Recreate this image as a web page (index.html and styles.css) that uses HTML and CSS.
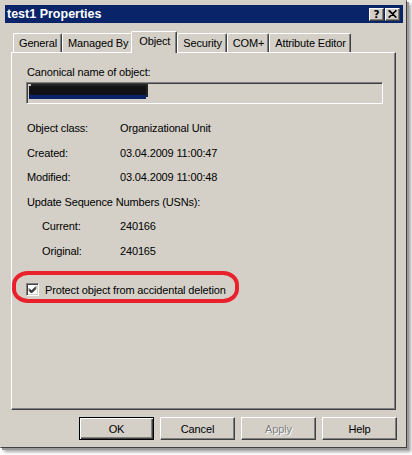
FILE: index.html
```html
<!DOCTYPE html>
<html>
<head>
<meta charset="utf-8">
<link rel="stylesheet" href="styles.css">
</head>
<body>
<div class="window">
  <div class="titlebar">
    <span class="title">test1 Properties</span>
    <div class="tb-buttons">
      <span class="tb-btn">?</span>
      <span class="tb-btn close">
        <svg width="9" height="8" viewBox="0 0 9 8"><path d="M0.5 0.5 L8 7.5 M1.5 0.5 L8.5 7.5 M8 0.5 L0.5 7.5 M8.5 0.5 L1 7.5" stroke="#000" stroke-width="1.1" fill="none"/></svg>
      </span>
    </div>
  </div>
  <div class="tabs">
    <span class="tab">General</span>
    <span class="tab">Managed By</span>
    <span class="tab active">Object</span>
    <span class="tab">Security</span>
    <span class="tab">COM+</span>
    <span class="tab">Attribute Editor</span>
  </div>
  <div class="panel">
    <div class="label">Canonical name of object:</div>
    <div class="textbox"><span class="redact"></span></div>
    <div class="rows">
      <div class="row"><span class="k">Object class:</span><span class="v">Organizational Unit</span></div>
      <div class="row"><span class="k">Created:</span><span class="v">03.04.2009 11:00:47</span></div>
      <div class="row"><span class="k">Modified:</span><span class="v">03.04.2009 11:00:48</span></div>
      <div class="row"><span class="k">Update Sequence Numbers (USNs):</span></div>
      <div class="row sub"><span class="k">Current:</span><span class="v">240166</span></div>
      <div class="row sub"><span class="k">Original:</span><span class="v">240165</span></div>
    </div>
    <div class="check">
      <span class="box"><svg width="9" height="9" viewBox="0 0 9 9"><path d="M1 3.5 L3.5 6 L8 1.5 M1 4.5 L3.5 7 L8 2.5 M1 5.5 L3.5 8 L8 3.5" stroke="#000" stroke-width="1" fill="none"/></svg></span>
      <span>Protect object from accidental deletion</span>
      <div class="ring"></div>
    </div>
  </div>
  <div class="buttons">
    <span class="btn default"><span>OK</span></span>
    <span class="btn"><span>Cancel</span></span>
    <span class="btn disabled"><span>Apply</span></span>
    <span class="btn"><span>Help</span></span>
  </div>
</div>
</body>
</html>
```
FILE: styles.css
```css
html, body {
  margin: 0;
  padding: 0;
  background: #ffffff;
}
body {
  width: 412px;
  height: 455px;
  overflow: hidden;
  font-family: "Liberation Sans", Arial, sans-serif;
  font-size: 11px;
  letter-spacing: -0.15px;
  color: #000;
}
.window {
  box-sizing: border-box;
  width: 407px;
  height: 448px;
  background: #d4d0c8;
  border-top: 1px solid #d4d0c8;
  border-left: 1px solid #d4d0c8;
  border-right: 1px solid #404040;
  border-bottom: 1px solid #404040;
  box-shadow: 2px 2px 0 #9a9a9a, 4px 4px 3px rgba(0,0,0,0.35);
  padding: 4px 3px 3px 3px;
  display: flex;
  flex-direction: column;
  position: relative;
}
.titlebar {
  height: 18px;
  margin: 0 0 0 1px;
  background: #0a246a;
  display: flex;
  align-items: center;
  justify-content: space-between;
  padding: 0 3px 0 2px;
}
.title {
  color: #fff;
  font-family: "Liberation Sans", sans-serif;
  font-weight: bold;
  font-size: 12.5px;
  letter-spacing: 0;
}
.tb-buttons {
  display: flex;
  gap: 1px;
}
.tb-btn {
  box-sizing: border-box;
  width: 15px;
  height: 13px;
  background: #d4d0c8;
  border-top: 1px solid #fff;
  border-left: 1px solid #fff;
  border-right: 1px solid #404040;
  border-bottom: 1px solid #404040;
  box-shadow: inset -1px -1px 0 #808080;
  display: flex;
  align-items: center;
  justify-content: center;
  font-family: "DejaVu Sans", sans-serif;
  font-weight: bold;
  font-size: 10.5px;
  line-height: 1;
  letter-spacing: 0;
}
.tabs {
  display: flex;
  align-items: flex-end;
  margin: 8px 0 0 7px;
  padding-left: 2px;
  height: 21px;
  position: relative;
  z-index: 2;
}
.tab {
  box-sizing: border-box;
  height: 19px;
  padding: 3px 4px 0 5px;
  border-top: 1px solid #fff;
  border-left: 1px solid #fff;
  border-right: 1px solid #404040;
  box-shadow: inset -1px 0 0 #808080;
  border-radius: 2px 2px 0 0;
  margin-right: 0;
  white-space: nowrap;
}
.tab.active {
  height: 22px;
  margin: 0 -1px 0 -2px;
  padding: 3px 6px 0 7px;
  background: #d4d0c8;
  position: relative;
  top: 1px;
}
.tab.active + .tab { margin-left: 1px; }
.panel {
  box-sizing: border-box;
  margin: 0 7px 0 7px;
  height: 358px;
  border-top: 1px solid #fff;
  border-left: 1px solid #fff;
  border-right: 1px solid #404040;
  border-bottom: 1px solid #404040;
  box-shadow: inset -1px -1px 0 #808080;
  padding: 12px 12px 0 15px;
  position: relative;
  z-index: 1;
}
.label {
  height: 14px;
  line-height: 14px;
}
.textbox {
  box-sizing: border-box;
  margin: 3px 0 0 -1px;
  width: 357px;
  height: 22px;
  border-top: 1px solid #808080;
  border-left: 1px solid #808080;
  border-right: 1px solid #fff;
  border-bottom: 1px solid #fff;
  box-shadow: inset 1px 1px 0 #404040, inset -1px -1px 0 #d4d0c8;
  padding: 3px 2px;
  display: flex;
}
.redact {
  display: block;
  width: 117px;
  height: 13px;
  background: linear-gradient(#141414, #101018 70%, #0a246a 70%);
  box-shadow: 2px -2px 0 #222;
}
.rows {
  margin-top: 17px;
  display: flex;
  flex-direction: column;
  gap: 10.5px;
}
.row {
  display: flex;
  height: 14px;
  line-height: 14px;
}
.row .k { width: 93px; white-space: nowrap; }
.row.sub .k { width: 78px; margin-left: 15px; }
.check {
  margin-top: 25px;
  display: flex;
  align-items: center;
  gap: 6px;
  height: 14px;
  position: relative;
  margin-left: -1px;
}
.box {
  box-sizing: border-box;
  width: 13px;
  height: 13px;
  background: #fff;
  border-top: 1px solid #808080;
  border-left: 1px solid #808080;
  border-right: 1px solid #fff;
  border-bottom: 1px solid #fff;
  box-shadow: inset 1px 1px 0 #404040, inset -1px -1px 0 #d4d0c8;
  display: flex;
  align-items: center;
  justify-content: center;
}
.ring {
  position: absolute;
  left: -14px;
  top: -12px;
  width: 219px;
  height: 24px;
  border: 4px solid #e8212b;
  border-radius: 16px / 14px;
}
.buttons {
  display: flex;
  justify-content: flex-end;
  gap: 6px;
  margin: 7px 6px 0 0;
}
.btn {
  box-sizing: border-box;
  width: 75px;
  height: 23px;
  border-top: 1px solid #fff;
  border-left: 1px solid #fff;
  border-right: 1px solid #404040;
  border-bottom: 1px solid #404040;
  box-shadow: inset -1px -1px 0 #808080;
  display: flex;
  align-items: center;
  justify-content: center;
}
.btn.default {
  border: 1px solid #000;
  box-shadow: inset 1px 1px 0 #fff, inset -1px -1px 0 #404040, inset -2px -2px 0 #808080;
}
.btn.disabled span {
  color: #808080;
  text-shadow: 1px 1px 0 #fff;
}
```
